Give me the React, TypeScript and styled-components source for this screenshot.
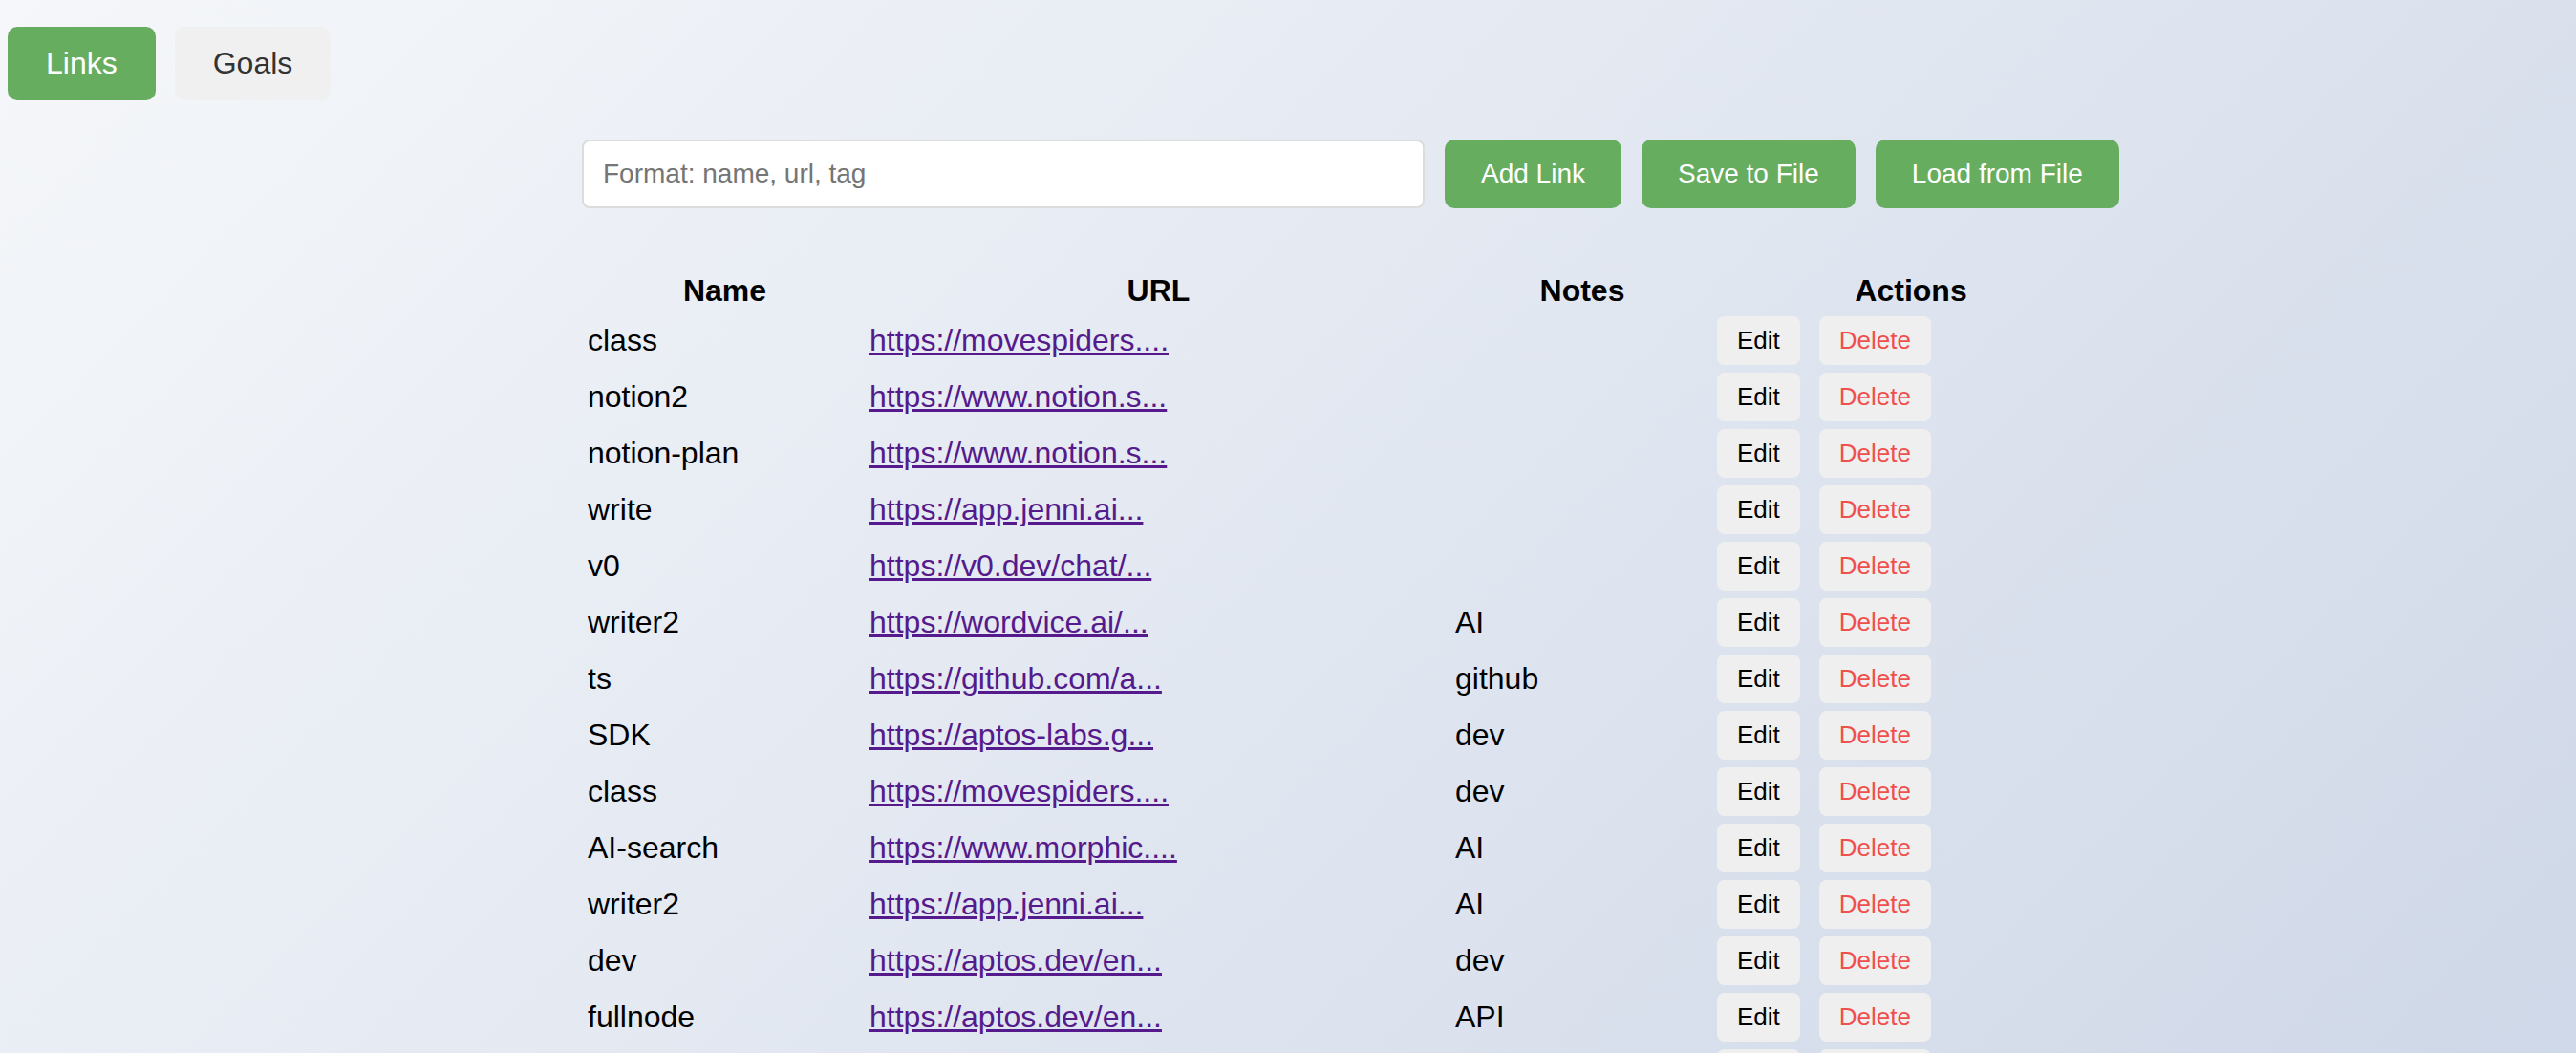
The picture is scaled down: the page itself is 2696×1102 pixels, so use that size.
import React from "react";
import styled, { createGlobalStyle } from "styled-components";

const GlobalStyle = createGlobalStyle`
  html, body {
    margin: 0;
    padding: 0;
  }
  body {
    font-family: "Liberation Sans", Arial, Helvetica, sans-serif;
  }
`;

const Page = styled.div`
  min-height: 100vh;
  box-sizing: border-box;
  padding: 28px 8px 40px;
  background: linear-gradient(135deg, #f5f7fa 0%, #cfd8e8 100%) fixed;
`;

const TabBar = styled.nav`
  display: flex;
  gap: 20px;
`;

const TabButton = styled.button<{ $active?: boolean }>`
  font-family: inherit;
  font-size: 32px;
  line-height: 37px;
  padding: 20px 40px;
  border: none;
  border-radius: 10px;
  cursor: pointer;
  background: ${(p) => (p.$active ? "#67ad5f" : "#f0f0f0")};
  color: ${(p) => (p.$active ? "#ffffff" : "#333333")};
`;

const Main = styled.main`
  width: 1600px;
  margin: 41px 0 0 601px;
`;

const InputRow = styled.div`
  display: flex;
  align-items: stretch;
  gap: 21px;
  height: 72px;
`;

const LinkInput = styled.input`
  flex: none;
  width: 882px;
  box-sizing: border-box;
  font-family: inherit;
  font-size: 28px;
  padding: 0 20px;
  border: 2px solid #dcdcdc;
  border-radius: 8px;
  background: #ffffff;
  color: #222;
  outline: none;
  &::placeholder {
    color: #757575;
  }
`;

const ActionButton = styled.button`
  flex: none;
  white-space: nowrap;
  font-family: inherit;
  font-size: 28px;
  padding: 0 38px;
  border: none;
  border-radius: 10px;
  background: #67ad5f;
  color: #ffffff;
  cursor: pointer;
`;

const Table = styled.table`
  width: 1600px;
  margin-top: 62px;
  table-layout: fixed;
  border-spacing: 4px;
  font-size: 32px;
  color: #000;
`;

const HeadCell = styled.th`
  font-weight: bold;
  font-size: 32px;
  line-height: 37px;
  padding: 2px;
  text-align: center;
`;

const Cell = styled.td`
  padding: 2px;
  line-height: 37px;
  white-space: nowrap;
  overflow: hidden;
`;

const UrlLink = styled.a`
  color: #551a8b;
  text-decoration: underline;
`;

const RowActions = styled.div`
  display: flex;
  gap: 20px;
`;

const SmallButton = styled.button<{ $danger?: boolean }>`
  font-family: inherit;
  font-size: 26px;
  height: 51px;
  padding: 0 21px;
  border: none;
  border-radius: 8px;
  background: #efefef;
  color: ${(p) => (p.$danger ? "#f0504c" : "#000000")};
  cursor: pointer;
`;

type LinkItem = { name: string; url: string; notes: string };

const links: LinkItem[] = [
  { name: "class", url: "https://movespiders.com/class", notes: "" },
  { name: "notion2", url: "https://www.notion.so/workspace-2", notes: "" },
  { name: "notion-plan", url: "https://www.notion.so/plan", notes: "" },
  { name: "write", url: "https://app.jenni.ai/editor", notes: "" },
  { name: "v0", url: "https://v0.dev/chat/new", notes: "" },
  { name: "writer2", url: "https://wordvice.ai/ko", notes: "AI" },
  { name: "ts", url: "https://github.com/aptos-labs/aptos-ts-sdk", notes: "github" },
  { name: "SDK", url: "https://aptos-labs.github.io/aptos-ts-sdk/", notes: "dev" },
  { name: "class", url: "https://movespiders.com/courses", notes: "dev" },
  { name: "AI-search", url: "https://www.morphic.sh/", notes: "AI" },
  { name: "writer2", url: "https://app.jenni.ai/", notes: "AI" },
  { name: "dev", url: "https://aptos.dev/en/build/guides", notes: "dev" },
  { name: "fullnode", url: "https://aptos.dev/en/network/nodes", notes: "API" },
  { name: "explorer", url: "https://explorer.aptoslabs.com/", notes: "dev" },
];

const truncate = (url: string) => (url.length > 20 ? url.slice(0, 20) + "..." : url);

export default function App() {
  return (
    <>
      <GlobalStyle />
      <Page>
        <TabBar>
          <TabButton $active>Links</TabButton>
          <TabButton>Goals</TabButton>
        </TabBar>
        <Main>
          <InputRow>
            <LinkInput placeholder="Format: name, url, tag" />
            <ActionButton>Add Link</ActionButton>
            <ActionButton>Save to File</ActionButton>
            <ActionButton>Load from File</ActionButton>
          </InputRow>
          <Table>
            <colgroup>
              <col style={{ width: "291px" }} />
              <col style={{ width: "609px" }} />
              <col style={{ width: "270px" }} />
              <col style={{ width: "410px" }} />
            </colgroup>
            <thead>
              <tr>
                <HeadCell>Name</HeadCell>
                <HeadCell>URL</HeadCell>
                <HeadCell>Notes</HeadCell>
                <HeadCell>Actions</HeadCell>
              </tr>
            </thead>
            <tbody>
              {links.map((l, i) => (
                <tr key={i}>
                  <Cell>{l.name}</Cell>
                  <Cell>
                    <UrlLink href={l.url}>{truncate(l.url)}</UrlLink>
                  </Cell>
                  <Cell>{l.notes}</Cell>
                  <Cell>
                    <RowActions>
                      <SmallButton>Edit</SmallButton>
                      <SmallButton $danger>Delete</SmallButton>
                    </RowActions>
                  </Cell>
                </tr>
              ))}
            </tbody>
          </Table>
        </Main>
      </Page>
    </>
  );
}
